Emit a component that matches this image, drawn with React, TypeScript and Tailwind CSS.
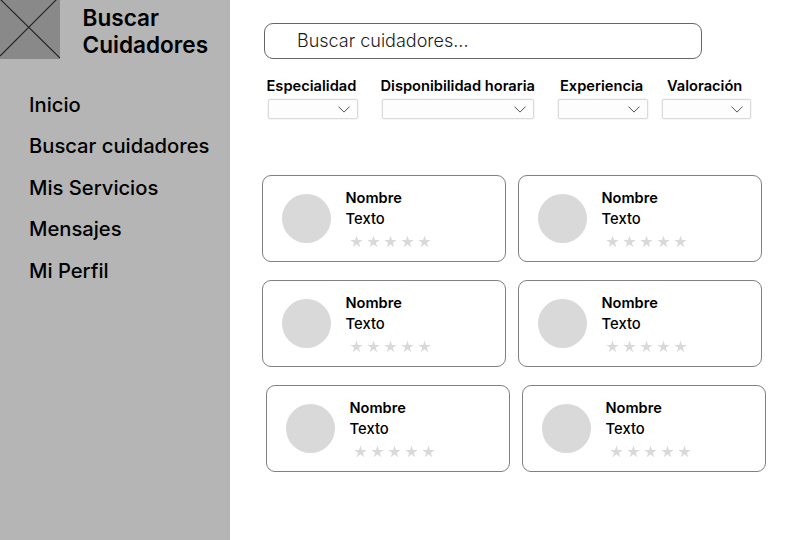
import React from "react";

const navItems = ["Inicio", "Buscar cuidadores", "Mis Servicios", "Mensajes", "Mi Perfil"];

function Star() {
  return (
    <svg viewBox="0 0 24 24" className="h-[13px] w-[13px]" fill="#d9d9d9">
      <path d="M12 .8 14.7 9H23.4L16.4 14.1 19 22.4 12 17.3 5 22.4 7.6 14.1.6 9H9.3Z" />
    </svg>
  );
}

function Filter({ label, className, labelClass }: { label: string; className: string; labelClass: string }) {
  return (
    <div className={className}>
      <div className={`whitespace-nowrap text-[14.65px] leading-[18px] font-semibold ${labelClass}`}>{label}</div>
      <div className="mt-[4px] flex h-[20px] items-center justify-end rounded-[2px] border border-[#dadada] bg-[#fdfdfd] pr-[7px] shadow-[0_0_2px_#ddd]">
        <svg viewBox="0 0 12 7" className="h-[7px] w-[12px]" fill="none" stroke="#555" strokeWidth="1">
          <path d="M.5.6 6 6.1 11.5.6" />
        </svg>
      </div>
    </div>
  );
}

function CaregiverCard() {
  return (
    <article className="flex h-[87px] w-[244px] rounded-[9px] border border-[#808080] bg-white pl-[19px]">
      <div className="mt-[18px] h-[49px] w-[49px] rounded-full bg-[#d9d9d9]" />
      <div className="ml-[14.5px] pt-[12px]">
        <h2 className="text-[14.6px] leading-[20px] font-semibold">Nombre</h2>
        <p className="mt-px text-[14.8px] leading-[20px] font-medium">Texto</p>
        <div className="mt-[6px] ml-[4.5px] flex gap-[4px]">
          {[1, 2, 3, 4, 5].map((star) => (
            <Star key={star} />
          ))}
        </div>
      </div>
    </article>
  );
}

export default function App() {
  return (
    <div className="flex h-[540px] w-[806px] overflow-hidden bg-white font-['Inter',sans-serif] text-black">
      <aside className="h-full w-[230px] shrink-0 bg-[#b5b5b5]">
        <header className="flex">
          <svg viewBox="0 0 60 59" className="h-[59px] w-[60px] shrink-0 bg-[#898989]" stroke="#222" strokeWidth="1.1">
            <path d="M0-1 60 58M0 56 57-1" />
          </svg>
          <h1 className="mt-[4px] ml-[22.5px] text-[22.6px] leading-[27px] font-semibold">
            Buscar
            <br />
            Cuidadores
          </h1>
        </header>
        <nav className="mt-[31.5px] ml-[29px] flex flex-col gap-[14.6px]">
          {navItems.map((item) => (
            <a key={item} className="text-[20.2px] leading-[27px] font-medium whitespace-nowrap">
              {item}
            </a>
          ))}
        </nav>
      </aside>
      <main className="flex flex-col pt-[23px] pl-[32px]">
        <div className="ml-[2px] flex h-[36px] w-[438px] items-center rounded-[9px] border border-[#666] pl-[32px] text-[18px] font-light text-[#1c1c1c]">
          <span className="-mt-px">Buscar cuidadores...</span>
        </div>
        <section className="mt-[18px] ml-[6px] flex">
          <Filter label="Especialidad" className="w-[90px]" labelClass="-ml-[1.5px]" />
          <Filter label="Disponibilidad horaria" className="ml-[24px] w-[152px]" labelClass="-ml-[1.5px]" />
          <Filter label="Experiencia" className="ml-[24px] w-[90px]" labelClass="ml-[2px]" />
          <Filter label="Valoración" className="ml-[14px] w-[89px]" labelClass="ml-[5px]" />
        </section>
        <section className="mt-[56px] flex flex-col gap-[18px]">
          <div className="flex gap-[12px]">
            <CaregiverCard />
            <CaregiverCard />
          </div>
          <div className="flex gap-[12px]">
            <CaregiverCard />
            <CaregiverCard />
          </div>
          <div className="ml-[4px] flex gap-[12px]">
            <CaregiverCard />
            <CaregiverCard />
          </div>
        </section>
      </main>
    </div>
  );
}
